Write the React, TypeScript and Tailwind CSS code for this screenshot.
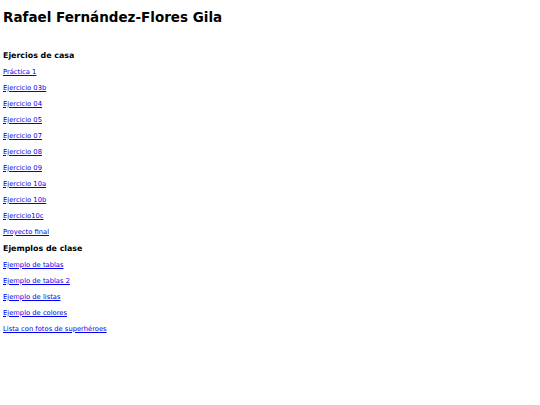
const homework = [
  'Práctica 1',
  'Ejercicio 03b',
  'Ejercicio 04',
  'Ejercicio 05',
  'Ejercicio 07',
  'Ejercicio 08',
  'Ejercicio 09',
  'Ejercicio 10a',
  'Ejercicio 10b',
  'Ejercicio10c',
  'Proyecto final',
]

const classExamples = [
  'Ejemplo de tablas',
  'Ejemplo de tablas 2',
  'Ejemplo de listas',
  'Ejemplo de colores',
  'Lista con fotos de superhéroes',
]

const LinkRow = ({ label }: { label: string }) => (
  <div className="h-[16px] pt-[2px] flex items-center">
    <a href="#" className="text-[6.75px] leading-none text-[#0000ee] underline">
      {label}
    </a>
  </div>
)

const App = () => {
  return (
    <div className="w-[540px] h-[405px] bg-white text-black px-[3px] font-['DejaVu_Sans',Verdana,sans-serif] flex flex-col">
      <h1 className="h-[34px] pt-[2px] flex items-center text-[13.5px] font-bold leading-none">
        Rafael Fernández-Flores Gila
      </h1>

      <h3 className="mt-[13px] h-[16px] pt-[2px] flex items-center text-[7.9px] font-bold leading-none">
        Ejercios de casa
      </h3>
      {homework.map((item) => (
        <LinkRow key={item} label={item} />
      ))}

      <h3 className="mt-[1px] h-[16px] pt-[2px] flex items-center text-[7.9px] font-bold leading-none">
        Ejemplos de clase
      </h3>
      {classExamples.map((item) => (
        <LinkRow key={item} label={item} />
      ))}
    </div>
  )
}

export default App
